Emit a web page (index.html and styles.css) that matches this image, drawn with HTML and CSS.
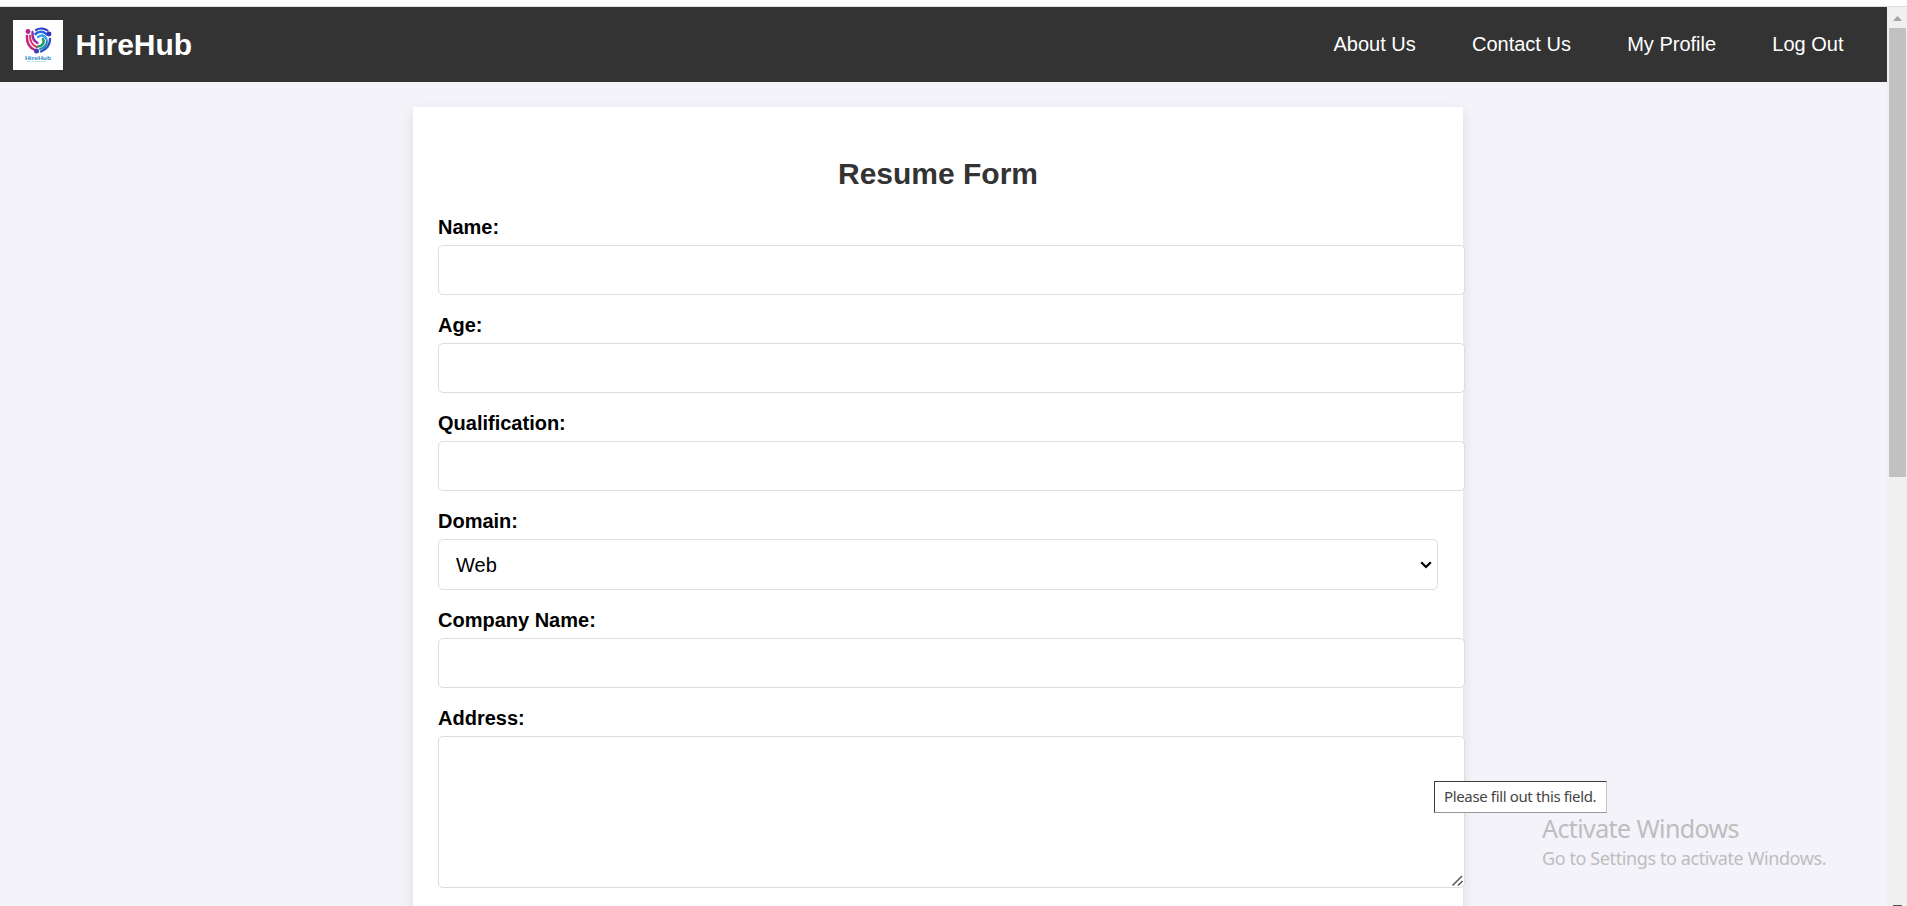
FILE: index.html
```html
<!DOCTYPE html>
<html lang="en">
<head>
<meta charset="utf-8">
<title>HireHub</title>
<link rel="stylesheet" href="styles.css">
</head>
<body>
<div class="top-edge"></div>
<div class="viewport">
  <div class="page">
    <header class="header">
      <svg class="logo" viewBox="0 0 50 50" role="img" aria-label="HireHub">
        <rect width="50" height="50" fill="#fff"/>
        <g fill="none" stroke-linecap="round">
          <path d="M14 16C13.500 23 17 28 22 30" stroke="#c32483" stroke-width="2.400"/>
          <path d="M17 15.500C17 21 19 25 23.500 27" stroke="#e0355f" stroke-width="2"/>
          <path d="M19.500 12C19 18 20.500 21 24.500 23" stroke="#8d2fa6" stroke-width="2.400"/>
          <path d="M23 10C27 7.500 32 8.500 34.500 10.500" stroke="#2d3fc4" stroke-width="2.200"/>
          <path d="M22.500 14C26 10.500 31 11.500 34 14.500" stroke="#2567e0" stroke-width="2.600"/>
          <path d="M25 17C29 14 32 16 33.500 19" stroke="#36a0ea" stroke-width="2.400"/>
          <path d="M37 19C37 25 33 29.500 28 31.500" stroke="#2a52c8" stroke-width="2.400"/>
          <path d="M34 21C34 25 31 28 27 29" stroke="#2585b8" stroke-width="2"/>
          <path d="M30 19C32 23 29 26.500 25 26.500" stroke="#1f9d6c" stroke-width="2.600"/>
        </g>
        <circle cx="15" cy="11.500" r="2.400" fill="#b8228c"/>
        <circle cx="36" cy="14" r="2.400" fill="#3433b5"/>
        <circle cx="23.500" cy="31" r="2.500" fill="#3d3fae"/>
        <text class="logo-name" x="12" y="39.500" textLength="26" lengthAdjust="spacingAndGlyphs">HireHub</text>
        <path d="M14 41.500h20" stroke="#a8e6dc" stroke-width="1.200" stroke-dasharray="3 1"/>
      </svg>
      <span class="brand">HireHub</span>
      <nav class="nav"><a>About Us</a><a>Contact Us</a><a>My Profile</a><a>Log Out</a></nav>
    </header>
    <main class="card">
      <h2 class="title">Resume Form</h2>
      <form class="form">
        <label class="label" for="name">Name:</label>
        <input class="field" id="name" type="text">
        <label class="label" for="age">Age:</label>
        <input class="field" id="age" type="text">
        <label class="label" for="qualification">Qualification:</label>
        <input class="field" id="qualification" type="text">
        <label class="label" for="domain">Domain:</label>
        <div class="select-wrap">
          <select class="field select" id="domain"><option>Web</option></select>
          <svg class="chevron" viewBox="0 0 12 8"><path d="M1.200 1.200L6 6l4.800-4.800" fill="none" stroke="#000" stroke-width="2.200"/></svg>
        </div>
        <label class="label" for="company">Company Name:</label>
        <input class="field" id="company" type="text">
        <label class="label" for="address">Address:</label>
        <div class="area-wrap">
          <textarea class="field area" id="address"></textarea>
          <svg class="grip" viewBox="0 0 11 11"><path d="M.5 10.500l9.500-9.500M6 10.500L10.500 6" fill="none" stroke="#555" stroke-width="1.500"/></svg>
        </div>
      </form>
    </main>
  </div>
  <div class="scrollbar">
    <svg class="arrow" viewBox="0 0 20 21"><path d="M6 14h9l-4.500-5z" fill="#a3a3a3"/></svg>
    <div class="thumb"></div>
    <div class="arrow-down"></div>
  </div>
</div>
<div class="tooltip">Please fill out this field.</div>
<div class="watermark">
  <div class="wm-title">Activate Windows</div>
  <div class="wm-text">Go to Settings to activate Windows.</div>
</div>
</body>
</html>
```
FILE: styles.css
```css
* { box-sizing: border-box; }
body {
  margin: 0;
  height: 906px;
  overflow: hidden;
  display: flex;
  flex-direction: column;
  font-family: "Liberation Sans", Arial, sans-serif;
  background: #f4f3f9;
}
.top-edge { height: 7px; flex: none; background: #fff; border-bottom: 1px solid #dadcdf; }
.viewport { display: flex; height: 899px; }
.page { flex: 1; height: 899px; overflow: hidden; }
.header {
  height: 75px;
  background: #333;
  color: #fff;
  display: flex;
  align-items: center;
  padding: 0 43.500px 0 13px;
}
.logo { width: 50px; height: 50px; }
.logo-name { font: bold 5px "Liberation Sans", sans-serif; fill: #2787cf; }
.brand { margin-left: 12.500px; font-size: 30px; font-weight: bold; line-height: 34px; }
.nav { margin-left: auto; display: flex; gap: 56.250px; font-size: 20px; line-height: 24px; padding-bottom: 2px; }
.card {
  width: 1050px;
  height: 1000px;
  margin: 25px 0 0 413px;
  padding: 50px 25px 0;
  background: #fff;
  box-shadow: 0 5px 12.500px rgba(0, 0, 0, .1);
}
.title { margin: 0; text-align: center; font-size: 30px; line-height: 34px; color: #333; }
.form { padding-top: 22px; }
.label { display: block; font-size: 20px; font-weight: bold; line-height: 23px; padding-top: 3px; height: 32px; }
.field {
  display: block;
  width: 1027px;
  height: 50px;
  margin: 0 0 16px;
  padding: 12px;
  border: 1px solid #ddd;
  border-radius: 5px;
  background: #fff;
  color: #000;
  font: 20px "Liberation Sans", Arial, sans-serif;
}
.select-wrap, .area-wrap { position: relative; }
.select { width: 1000px; height: 51px; appearance: none; padding-left: 17px; }
.chevron { position: absolute; right: 6px; top: 22px; width: 12px; height: 8px; }
.area-wrap { width: 1027px; }
.area { height: 152px; resize: none; }
.grip { position: absolute; right: 2px; bottom: 2px; width: 11px; height: 11px; }
.scrollbar { width: 20px; background: #f0f0f0; display: flex; flex-direction: column; }
.arrow { width: 20px; height: 21px; flex: none; }
.thumb { width: 17px; height: 449px; margin-left: 2px; background: #c1c1c1; }
.arrow-down { margin: auto 0 0 6px; width: 9px; height: 1px; background: #505050; }
.tooltip {
  position: absolute;
  left: 1434px;
  top: 781px;
  width: 173px;
  height: 32px;
  padding-left: 9px;
  border: 1px solid #3c3c3c;
  border-right-color: #c4c4c4;
  border-bottom-color: #969696;
  background: #fff;
  color: #444;
  font: 15px/28px "Noto Sans", sans-serif;
  letter-spacing: -.36px;
  white-space: nowrap;
}
.watermark {
  position: absolute;
  left: 1542px;
  top: 812px;
  color: #bdbdc0;
  font-family: "Noto Sans", sans-serif;
  white-space: nowrap;
}
.wm-title { font-size: 25px; line-height: 32px; letter-spacing: -.6px; }
.wm-text { font-size: 18px; line-height: 28px; letter-spacing: -.4px; }
```
